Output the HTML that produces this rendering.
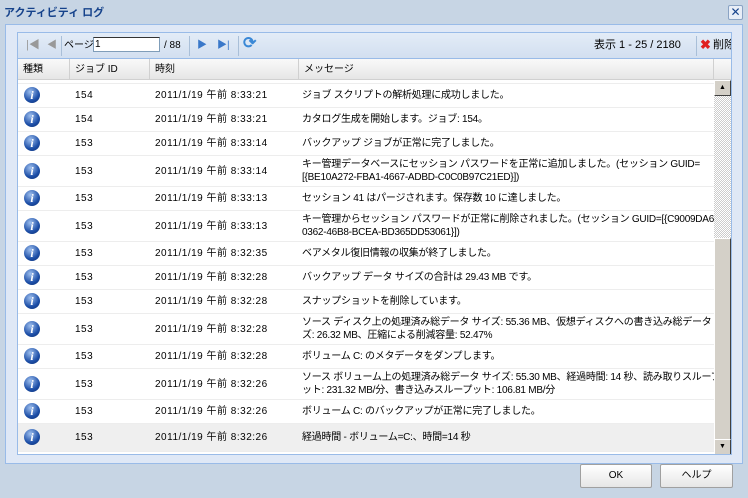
<!DOCTYPE html>
<html><head><meta charset="utf-8"><style>
*{margin:0;padding:0;box-sizing:border-box}
body{width:748px;height:498px;background:#c7d5e4;font-family:"Liberation Sans","Noto Sans CJK JP",sans-serif;font-size:10px;color:#000;position:relative;overflow:hidden}
span{white-space:nowrap;line-height:13px}
.title{position:absolute;left:4px;top:4px;font-weight:bold;color:#15428b;font-size:11px}
.close{position:absolute;left:728px;top:5px;width:15px;height:15px;border:1px solid #8aa3c4;background:#e8eef7;border-radius:2px;color:#15428b;font-size:12px;line-height:13px;text-align:center}
.outer{position:absolute;left:5px;top:24px;width:738px;height:440px;border:1px solid #99bbe8;background:#dfe8f6}
.panel{position:absolute;left:17px;top:32px;width:715px;height:423px;border:1px solid #99bbe8;background:#fff;overflow:hidden}
.tb{position:absolute;left:0;top:0;width:713px;height:26px;background:linear-gradient(#e3ecf7,#d2dff0);border-bottom:1px solid #99bbe8}
.hdr{position:absolute;left:0;top:26px;width:713px;height:21px;background:linear-gradient(#f9f9f9,#e6e6e6);border-bottom:1px solid #d0d0d0}
.hdr span{position:absolute;top:4px}
.hdr i{position:absolute;top:0;width:1px;height:21px;background:#d0d0d0}
.row{position:absolute;left:0;width:696px;border-bottom:1px solid #ededed}
.row span{position:absolute}
.ic{left:6px;width:16px;height:16px;border-radius:50%;background:radial-gradient(circle at 40% 30%,#9fc0ef,#1d4fa8 60%,#0b2c6e);color:#fff;font:bold italic 12px "Liberation Serif",serif;text-align:center;line-height:16px!important}
.sb{position:absolute;left:696px;top:47px;width:17px;height:375px;background:repeating-conic-gradient(#ccc 0 25%,#fff 0 50%) 0 0/2px 2px;z-index:2}
.btn{position:absolute;top:464px;height:24px;border:1px solid #a0a0a0;background:linear-gradient(#fff,#e6e6e6);border-radius:2px;text-align:center;line-height:22px;font-size:10px}
.msg{letter-spacing:-0.25px}
.tm{letter-spacing:0.5px}
</style></head><body>
<div class="title">アクティビティ ログ</div>
<div class="close">✕</div>
<div class="outer"></div>
<div class="panel">
<div class="tb">
<span style="position:absolute;left:8px;top:6px;color:#999;font-size:11px">|◀</span>
<span style="position:absolute;left:29px;top:6px;color:#999">◀</span>
<span style="position:absolute;left:43px;top:3px;width:1px;height:20px;background:#a9bfd8"></span>
<span style="position:absolute;left:46px;top:6px">ページ</span>
<span style="position:absolute;left:75px;top:4px;width:67px;height:15px;border:1px solid #7f9db9;border-top-color:#333;background:#fff;padding-left:1px">1</span>
<span style="position:absolute;left:146px;top:6px">/ 88</span>
<span style="position:absolute;left:171px;top:3px;width:1px;height:20px;background:#a9bfd8"></span>
<span style="position:absolute;left:179px;top:6px;color:#3a78c9">▶</span>
<span style="position:absolute;left:199px;top:6px;color:#3a78c9">▶|</span>
<span style="position:absolute;left:220px;top:3px;width:1px;height:20px;background:#a9bfd8"></span>
<span style="position:absolute;left:225px;top:4px;color:#3a88d6;font-size:16px;font-weight:bold">⟳</span>
<span style="position:absolute;left:576px;top:6px;font-size:11px">表示 1 - 25 / 2180</span>
<span style="position:absolute;left:678px;top:3px;width:1px;height:20px;background:#a9bfd8"></span>
<span style="position:absolute;left:682px;top:5px;color:#e02020;font-weight:bold;font-size:13px">✖</span>
<span style="position:absolute;left:695px;top:6px;font-size:11px">削除</span>
</div>
<div class="hdr">
<span style="left:5px">種類</span><i style="left:51px"></i>
<span style="left:57px">ジョブ ID</span><i style="left:131px"></i>
<span style="left:137px">時刻</span><i style="left:280px"></i>
<span style="left:286px">メッセージ</span><i style="left:695px"></i>
</div>
<div id="rows"></div>
<div class="sb">
<div style="position:absolute;left:0;top:0;width:17px;height:16px;background:#d4d0c8;border:1px solid;border-color:#fff #404040 #404040 #fff;font-size:7px;text-align:center;line-height:14px">▲</div>
<div style="position:absolute;left:0;top:158px;width:17px;height:202px;background:#d4d0c8;border:1px solid;border-color:#fff #404040 #404040 #fff"></div>
<div style="position:absolute;left:0;top:359px;width:17px;height:16px;background:#d4d0c8;border:1px solid;border-color:#fff #404040 #404040 #fff;font-size:7px;text-align:center;line-height:14px">▼</div>
</div>
</div>
<div class="btn" style="left:580px;width:72px">OK</div>
<div class="btn" style="left:660px;width:73px">ヘルプ</div>
<script>
var d=[
[47,4,"","",""],
[51,24,"154","8:33:21","ジョブ スクリプトの解析処理に成功しました。"],
[75,24,"154","8:33:21","カタログ生成を開始します。ジョブ: 154。"],
[99,24,"153","8:33:14","バックアップ ジョブが正常に完了しました。"],
[123,31,"153","8:33:14","キー管理データベースにセッション パスワードを正常に追加しました。(セッション GUID=<br>[{BE10A272-FBA1-4667-ADBD-C0C0B97C21ED}])"],
[154,24,"153","8:33:13","セッション 41 はパージされます。保存数 10 に達しました。"],
[178,31,"153","8:33:13","キー管理からセッション パスワードが正常に削除されました。(セッション GUID=[{C9009DA6-<br>0362-46B8-BCEA-BD365DD53061}])"],
[209,24,"153","8:32:35","ベアメタル復旧情報の収集が終了しました。"],
[233,24,"153","8:32:28","バックアップ データ サイズの合計は 29.43 MB です。"],
[257,24,"153","8:32:28","スナップショットを削除しています。"],
[281,31,"153","8:32:28","ソース ディスク上の処理済み総データ サイズ: 55.36 MB、仮想ディスクへの書き込み総データ サイ<br>ズ: 26.32 MB、圧縮による削減容量: 52.47%"],
[312,24,"153","8:32:28","ボリューム C: のメタデータをダンプします。"],
[336,31,"153","8:32:26","ソース ボリューム上の処理済み総データ サイズ: 55.30 MB、経過時間: 14 秒、読み取りスループ<br>ット: 231.32 MB/分、書き込みスループット: 106.81 MB/分"],
[367,24,"153","8:32:26","ボリューム C: のバックアップが正常に完了しました。"],
[391,28,"153","8:32:26","経過時間 - ボリューム=C:、時間=14 秒"]];
var h="";
d.forEach(function(r,i){
var bg=i==d.length-1?"background:#efefef;":"";
var t=r[1]>28?(r[1]-27)/2:(r[1]-14)/2;
if(r[2]){h+='<div class="row" style="'+bg+'top:'+r[0]+'px;height:'+r[1]+'px">'+
'<span class="ic" style="top:'+(r[1]/2-9)+'px">i</span>'+
'<span class="tm" style="left:57px;top:'+(r[1]/2-7)+'px">'+r[2]+'</span>'+
'<span class="tm" style="left:137px;top:'+(r[1]/2-7)+'px">2011/1/19 午前 '+r[3]+'</span>'+
'<span class="msg" style="left:284px;top:'+t+'px">'+r[4]+'</span></div>';}
else h+='<div class="row" style="top:'+r[0]+'px;height:'+r[1]+'px"></div>';
});
document.getElementById("rows").innerHTML=h;
</script>
</body></html>
